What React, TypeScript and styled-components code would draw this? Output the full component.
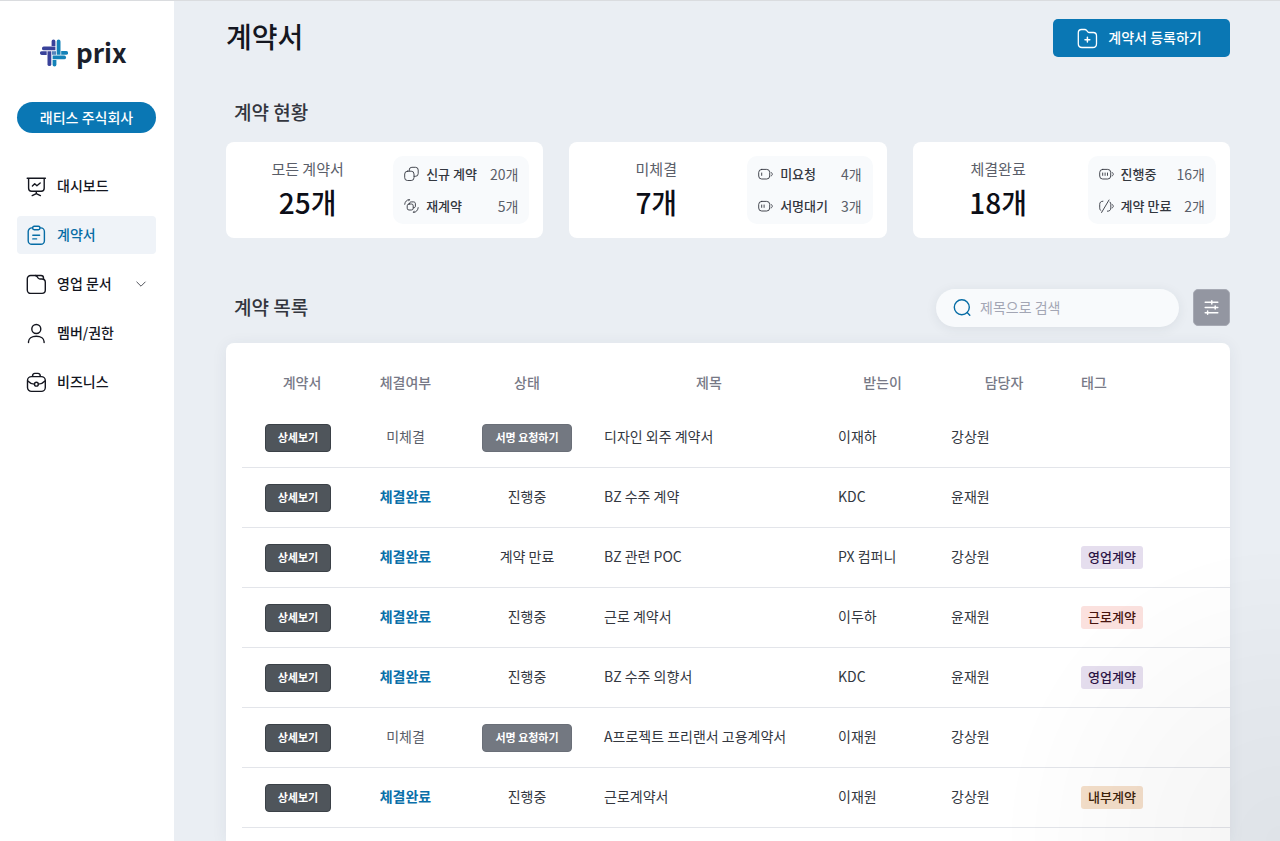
import React from "react";
import styled, { createGlobalStyle } from "styled-components";

const color = {
  primary: "#0a77b4",
  ink: "#14161f",
  text: "#33373f",
  muted: "#5a5e69",
  head: "#777986",
  line: "#e3e5ea",
  canvas: "#eaeef3",
  soft: "#f8fafc",
};

const GlobalStyle = createGlobalStyle`
  *, *::before, *::after { box-sizing: border-box; }
  body {
    margin: 0;
    background: ${color.canvas};
    color: ${color.ink};
    font-family: "Noto Sans CJK KR", "Noto Sans", sans-serif;
    font-size: 14px;
    line-height: 20px;
  }
  button, input { font: inherit; }
  h1, h2, p, dl, dd, ul { margin: 0; padding: 0; }
`;

const Layout = styled.div`
  display: grid;
  grid-template-columns: 174px minmax(0, 1fr);
  min-height: 100vh;
  border-top: 1px solid #dadcdf;

  &::after {
    content: "";
    position: fixed;
    inset: 0;
    pointer-events: none;
    background: radial-gradient(
      280px 300px at 100% 100%,
      rgba(0, 0, 0, 0.045),
      rgba(0, 0, 0, 0.025) 50%,
      transparent
    );
  }
`;

const Sidebar = styled.aside`
  display: flex;
  flex-direction: column;
  padding: 36px 18px 24px 17px;
  background: #fff;
`;

const Brand = styled.a`
  display: flex;
  align-items: center;
  gap: 8px;
  height: 32px;
  padding-left: 23px;
  color: #1b1f2b;
  font-size: 26px;
  font-weight: 700;
  line-height: 32px;
  text-decoration: none;
`;

const Caption = styled.span`
  display: block;
  padding-bottom: 2px;
`;

const CompanyButton = styled.button`
  height: 31px;
  margin-top: 33px;
  padding: 0;
  border: 0;
  border-radius: 16px;
  background: ${color.primary};
  color: #fff;
  font-weight: 500;
`;

const NavList = styled.ul`
  display: flex;
  flex-direction: column;
  gap: 11px;
  margin-top: 34px;
  list-style: none;
`;

const NavLink = styled.a<{ $active?: boolean }>`
  display: flex;
  align-items: center;
  gap: 10px;
  height: 38px;
  padding: 0 9px;
  border-radius: 4px;
  background: ${(p) => (p.$active ? "#eff3f8" : "transparent")};
  color: ${(p) => (p.$active ? "#066ca5" : color.ink)};
  font-weight: 500;
  text-decoration: none;

  svg:nth-of-type(2) {
    margin-left: auto;
  }
`;

const Main = styled.main`
  display: flex;
  flex-direction: column;
  padding: 18px 50px 0 52px;
`;

const PageHeader = styled.header`
  display: flex;
  align-items: flex-start;
  justify-content: space-between;
`;

const PageTitle = styled.h1`
  font-size: 28px;
  font-weight: 500;
  line-height: 34px;
`;

const RegisterButton = styled.button`
  display: flex;
  align-items: center;
  justify-content: center;
  gap: 10px;
  width: 177px;
  height: 38px;
  padding: 0 4px 0 0;
  border: 0;
  border-radius: 5px;
  background: ${color.primary};
  color: #fff;
  font-weight: 500;
`;

const SectionTitle = styled.h2`
  padding-left: 8px;
  color: #33363e;
  font-size: 19px;
  font-weight: 500;
  line-height: 28px;
`;

const StatSection = styled.section`
  display: flex;
  flex-direction: column;
  gap: 16px;
  margin-top: 41px;
`;

const StatGrid = styled.div`
  display: grid;
  grid-template-columns: repeat(3, minmax(0, 1fr));
  gap: 26px;
`;

const StatCard = styled.article`
  display: flex;
  align-items: center;
  height: 96px;
  padding: 0 14px 0 0;
  border-radius: 8px;
  background: #fff;
`;

const StatTotal = styled.div`
  flex: 1;
  padding-right: 4px;
  text-align: center;
`;

const StatLabel = styled.p`
  color: ${color.muted};
  font-size: 15px;
  line-height: 24px;
`;

const StatValue = styled.p`
  color: #0c0e17;
  font-size: 28px;
  font-weight: 500;
  line-height: 42px;
`;

const Breakdown = styled.dl`
  display: flex;
  flex-direction: column;
  gap: 12px;
  padding: 8px 11px;
  border-radius: 10px;
  background: ${color.soft};
  height: 68px;
`;

const BreakdownRow = styled.div`
  display: flex;
  align-items: center;
  height: 20px;
`;

const BreakdownLabel = styled.dt`
  display: flex;
  align-items: center;
  gap: 7px;
  margin-right: 13px;
  color: ${color.text};
  font-size: 13px;
  font-weight: 500;
`;

const BreakdownValue = styled.dd`
  margin-left: auto;
  color: ${color.muted};
`;

const ListSection = styled.section`
  display: flex;
  flex: 1;
  flex-direction: column;
  gap: 16px;
  margin-top: 51px;
`;

const ListHeader = styled.div`
  display: flex;
  align-items: flex-start;
  height: 38px;
`;

const ListTitle = styled(SectionTitle)`
  line-height: 36px;
`;

const SearchBox = styled.label`
  display: flex;
  align-items: center;
  gap: 8px;
  width: 243px;
  height: 38px;
  margin: 0 14px 0 auto;
  padding: 0 16px;
  border-radius: 19px;
  background: ${color.soft};
  box-shadow: 0 2px 12px rgba(40, 50, 60, 0.08);
`;

const SearchInput = styled.input`
  flex: 1;
  min-width: 0;
  padding: 0 0 3px;
  border: 0;
  outline: 0;
  background: transparent;
  color: ${color.text};

  &::placeholder {
    color: #a3a6b4;
    opacity: 1;
  }
`;

const FilterButton = styled.button`
  display: grid;
  place-items: center;
  width: 37px;
  height: 37px;
  padding: 0;
  border: 1px solid #a7aab4;
  border-radius: 5px;
  background: #9396a1;
  color: #fff;
`;

const TablePanel = styled.div`
  flex: 1;
  padding: 14px 0 0 16px;
  border-radius: 8px 8px 0 0;
  background: #fff;
  box-shadow: 0 2px 16px rgba(40, 60, 80, 0.07);
`;

const Table = styled.table`
  width: 100%;
  border-collapse: separate;
  border-spacing: 0;
  table-layout: fixed;
`;

const Col = styled.col<{ $w?: number }>`
  width: ${(p) => (p.$w ? `${p.$w}px` : "auto")};
`;

const HeadCell = styled.th<{ $align?: "left" | "center"; $pad?: number }>`
  height: 51px;
  padding: 0 0 1px ${(p) => p.$pad ?? 0}px;
  color: ${color.head};
  font-weight: 500;
  text-align: ${(p) => p.$align ?? "center"};
`;

const Cell = styled.td<{ $align?: "left" | "center"; $pad?: number; $control?: boolean }>`
  height: 60px;
  padding: 0 0 ${(p) => (p.$control ? 0 : 3)}px ${(p) => p.$pad ?? 0}px;
  border-bottom: 1px solid ${color.line};
  color: ${color.text};
  text-align: ${(p) => p.$align ?? "left"};
  white-space: nowrap;
`;

const SmallButton = styled.button<{ $tone: "dark" | "gray" }>`
  width: ${(p) => (p.$tone === "dark" ? 66 : 90)}px;
  height: 28px;
  padding: 0 0 2px;
  border: 1px solid ${(p) => (p.$tone === "dark" ? "#3b4147" : "#6a6f78")};
  border-radius: 4px;
  background: ${(p) => (p.$tone === "dark" ? "#4f555b" : "#737881")};
  color: #fff;
  font-size: 11px;
  font-weight: 700;
  line-height: 16px;
  vertical-align: middle;
`;

const Signed = styled.span<{ $done: boolean }>`
  color: ${(p) => (p.$done ? "#0a6fa9" : color.muted)};
  font-weight: ${(p) => (p.$done ? 700 : 400)};
`;

type TagTone = "violet" | "rose" | "amber";

const tagColors: Record<TagTone, [string, string]> = {
  violet: ["#e5deee", "#2c1445"],
  rose: ["#fbe1de", "#48150f"],
  amber: ["#f4dfca", "#3d230a"],
};

const Tag = styled.span<{ $tone: TagTone }>`
  display: inline-block;
  padding: 0 7px 2px;
  border-radius: 3px;
  background: ${(p) => tagColors[p.$tone][0]};
  color: ${(p) => tagColors[p.$tone][1]};
  font-size: 13px;
  font-weight: 500;
  line-height: 21px;
  vertical-align: middle;
`;

const Icon = styled.svg.attrs((p) => ({
  fill: "none",
  stroke: p.stroke ?? "currentColor",
  strokeLinecap: "round" as const,
  strokeLinejoin: "round" as const,
  "aria-hidden": true,
}))`
  display: block;
  flex: none;
`;

const LogoMark = () => (
  <Icon width="28" height="28" viewBox="0 0 28 28" stroke="none">
    <g fill="#39429a">
      <path d="M11.6 6.9V2.3a1.9 1.9 0 0 1 3.8 0v4.6z" />
      <path d="M3.8 7.6h11.6v3.7H3.8a1.85 1.85 0 0 1 0-3.7z" />
      <path d="M1.8 12.2h4.9v3.7H1.8a1.85 1.85 0 0 1 0-3.7z" />
      <path d="M7.5 12.2h3.8v13a1.9 1.9 0 0 1-3.8 0z" />
    </g>
    <g fill="#1482b8">
      <path d="M16.7 15.8V2.5a1.9 1.9 0 0 1 3.8 0v13.3z" />
      <path d="M21.2 12.1h5a1.85 1.85 0 0 1 0 3.7h-5z" />
      <path d="M12.6 16.6h11.6a1.85 1.85 0 0 1 0 3.7H12.6z" />
      <path d="M12.6 21h3.8v4.6a1.9 1.9 0 0 1-3.8 0z" />
    </g>
    <path d="M12 12.2h4v3.6h-4z" fill="#2b64aa" opacity=".8" />
  </Icon>
);

const DashboardIcon = () => (
  <Icon width="21" height="21" viewBox="0 0 21 21" strokeWidth="1.4">
    <path d="M1.2 2.2h18.2M2.6 2.4v9.8a3 3 0 0 0 3 3h9.6a3 3 0 0 0 3-3V2.4M10.3 15.4v2.4M6.2 19.6l4.1-2 4.1 2M6.4 10l2.3-2.3 2.2 2L14.2 7" />
  </Icon>
);

const ContractIcon = () => (
  <Icon width="21" height="21" viewBox="0 0 21 21" strokeWidth="1.4">
    <path d="M6.6 2.9H5.8a3.6 3.6 0 0 0-3.6 3.6v9.2a3.6 3.6 0 0 0 3.6 3.6h9a3.6 3.6 0 0 0 3.6-3.6V6.5a3.6 3.6 0 0 0-3.6-3.6h-.8" />
    <rect x="6.6" y="1.3" width="7.4" height="3.4" rx="1.6" />
    <path d="M6.8 10.3h6.8M6.8 13.9h3.8" />
  </Icon>
);

const DocumentIcon = () => (
  <Icon width="21" height="21" viewBox="0 0 21 21" strokeWidth="1.4">
    <path d="M4.600 1.500h4.400c.9 0 1.600.4 2.100 1.100l1.100 1.500c.5.600 1 .9 1.800.9h1.900c2.100 0 3.400 1.300 3.400 3.300v7.800a3.300 3.300 0 0 1-3.300 3.300H4.600a3.300 3.300 0 0 1-3.300-3.300V4.800a3.300 3.300 0 0 1 3.300-3.300z" />
    <path d="M9.400 1.500h5.600c1.600 0 2.500.9 2.500 2.400v1.300" />
  </Icon>
);

const MemberIcon = () => (
  <Icon width="21" height="21" viewBox="0 0 21 21" strokeWidth="1.4">
    <circle cx="10.3" cy="6" r="4.5" />
    <path d="M2.5 19.500v-.7c0-3.400 3.200-5.600 7.800-5.600s7.800 2.200 7.800 5.600v.7" />
  </Icon>
);

const BusinessIcon = () => (
  <Icon width="21" height="21" viewBox="0 0 21 21" strokeWidth="1.4">
    <rect x="1.5" y="4.6" width="17.8" height="14.8" rx="4" />
    <path d="M6.5 4.400c0-1.900.9-3 2.400-3h3c1.500 0 2.400 1.100 2.400 3M1.800 9c1.700 1.900 4 2.900 6.500 3.100M19 9c-1.700 1.900-4 2.900-6.500 3.100" />
    <circle cx="10.4" cy="12.2" r="1.9" />
  </Icon>
);

const ChevronIcon = () => (
  <Icon width="12" height="12" viewBox="0 0 12 12" stroke="#3d4048" strokeWidth="0.9">
    <path d="M1.8 4l4.2 4.2L10.200 4" />
  </Icon>
);

const FolderPlusIcon = () => (
  <Icon width="21" height="21" viewBox="0 0 21 21" strokeWidth="1.3">
    <path d="M4.5 1.500h3.200c.8 0 1.400.3 1.900.9l1.200 1.400c.4.500.9.700 1.500.7h3.900c2.100 0 3.300 1.300 3.300 3.300v7.900c0 2.400-1.300 3.800-3.700 3.800H5c-2.400 0-3.700-1.400-3.700-3.800V4.700c0-2 1.200-3.200 3.200-3.200z" />
    <path d="M10.400 9.300v4.800M8 11.700h4.800" strokeWidth="1.5" />
  </Icon>
);

const SearchIcon = () => (
  <Icon width="20" height="20" viewBox="0 0 20 20" stroke="#066ca5" strokeWidth="1.4">
    <circle cx="9.800" cy="9.300" r="7.500" />
    <path d="M15.200 14.600l2.600 2.600" />
  </Icon>
);

const SlidersIcon = () => (
  <Icon width="15" height="17" viewBox="0 0 15 17" strokeWidth="1.5">
    <path d="M1.200 3.300h12.600M1.200 8.500h12.600M1.200 13.700h12.600" />
    <path d="M7.800 1.700v3.200M11.200 6.900v3.200M3.600 12.100v3.200" />
  </Icon>
);

const CopyIcon = () => (
  <Icon width="15" height="16" viewBox="0 0 15 16" strokeWidth="0.9">
    <rect x="0.7" y="5.2" width="9.3" height="9.3" rx="2.8" />
    <path d="M5.200 5V4a2.700 2.700 0 0 1 2.700-2.700h3.600A2.700 2.700 0 0 1 14.200 4v3.600a2.700 2.700 0 0 1-2.700 2.700h-1.300" />
  </Icon>
);

const RenewIcon = () => (
  <Icon width="15" height="16" viewBox="0 0 15 16" strokeWidth="0.9">
    <rect x="3.2" y="6" width="6" height="6" rx="1.8" />
    <path d="M5.400 5.800c0-1.200.7-1.900 1.900-1.900h2.200c1.200 0 1.900.7 1.900 1.900v2.200c0 1.200-.7 1.900-2 1.900" />
    <path d="M.7 6.300A5 5 0 0 1 5.600 1.500l-.8 1.300M14.200 9.600a5 5 0 0 1-4.900 4.900l.8-1.300" />
  </Icon>
);

const BatteryIcon = ({ bars }: { bars: number }) => (
  <Icon width="15" height="16" viewBox="0 0 15 16" strokeWidth="0.9">
    <rect x="0.7" y="3.4" width="11" height="9.6" rx="3" />
    <path d="M13.100 6.500c.9.400 1.200.9 1.200 1.700s-.3 1.300-1.200 1.700" />
    {Array.from({ length: bars }, (_, i) => (
      <path key={i} d={`M${3.7 + i * 2.4} 7v2.400`} />
    ))}
  </Icon>
);

const ExpiredIcon = () => (
  <Icon width="15" height="16" viewBox="0 0 15 16" strokeWidth="0.9">
    <path d="M3.900 3.200C1.700 3.300.7 4.300.7 6.600v3.200c0 1.400.4 2.300 1.200 2.800M8.400 13.200c2.300 0 3.400-1 3.400-3.400V6.600c0-1.100-.2-1.900-.7-2.500M10 2L2.600 14.500M13.100 6.500c.9.400 1.200.9 1.200 1.700s-.3 1.300-1.200 1.700" />
  </Icon>
);

const navItems = [
  { label: "대시보드", icon: <DashboardIcon /> },
  { label: "계약서", icon: <ContractIcon />, active: true },
  { label: "영업 문서", icon: <DocumentIcon />, expandable: true },
  { label: "멤버/권한", icon: <MemberIcon /> },
  { label: "비즈니스", icon: <BusinessIcon /> },
];

const stats = [
  {
    label: "모든 계약서",
    value: "25개",
    rows: [
      { label: "신규 계약", value: "20개", icon: <CopyIcon /> },
      { label: "재계약", value: "5개", icon: <RenewIcon /> },
    ],
  },
  {
    label: "미체결",
    value: "7개",
    rows: [
      { label: "미요청", value: "4개", icon: <BatteryIcon bars={1} /> },
      { label: "서명대기", value: "3개", icon: <BatteryIcon bars={2} /> },
    ],
  },
  {
    label: "체결완료",
    value: "18개",
    rows: [
      { label: "진행중", value: "16개", icon: <BatteryIcon bars={3} /> },
      { label: "계약 만료", value: "2개", icon: <ExpiredIcon /> },
    ],
  },
];

type Contract = {
  status?: string;
  title: string;
  receiver: string;
  manager: string;
  tag?: { label: string; tone: TagTone };
};

const sales = { label: "영업계약", tone: "violet" as const };

// A contract without a status has not been signed yet.
const contracts: Contract[] = [
  { title: "디자인 외주 계약서", receiver: "이재하", manager: "강상원" },
  { status: "진행중", title: "BZ 수주 계약", receiver: "KDC", manager: "윤재원" },
  { status: "계약 만료", title: "BZ 관련 POC", receiver: "PX 컴퍼니", manager: "강상원", tag: sales },
  {
    status: "진행중",
    title: "근로 계약서",
    receiver: "이두하",
    manager: "윤재원",
    tag: { label: "근로계약", tone: "rose" },
  },
  { status: "진행중", title: "BZ 수주 의향서", receiver: "KDC", manager: "윤재원", tag: sales },
  { title: "A프로젝트 프리랜서 고용계약서", receiver: "이재원", manager: "강상원" },
  {
    status: "진행중",
    title: "근로계약서",
    receiver: "이재원",
    manager: "강상원",
    tag: { label: "내부계약", tone: "amber" },
  },
];

export default function App() {
  return (
    <>
      <GlobalStyle />
      <Layout>
        <Sidebar>
          <Brand href="#">
            <LogoMark />
            <Caption>prix</Caption>
          </Brand>
          <CompanyButton type="button">
            <Caption>래티스 주식회사</Caption>
          </CompanyButton>
          <nav>
            <NavList>
              {navItems.map((item) => (
                <li key={item.label}>
                  <NavLink href="#" $active={item.active} aria-current={item.active ? "page" : undefined}>
                    {item.icon}
                    <Caption>{item.label}</Caption>
                    {item.expandable && <ChevronIcon />}
                  </NavLink>
                </li>
              ))}
            </NavList>
          </nav>
        </Sidebar>

        <Main>
          <PageHeader>
            <PageTitle>계약서</PageTitle>
            <RegisterButton type="button">
              <FolderPlusIcon />
              <Caption>계약서 등록하기</Caption>
            </RegisterButton>
          </PageHeader>

          <StatSection>
            <SectionTitle>계약 현황</SectionTitle>
            <StatGrid>
              {stats.map((stat) => (
                <StatCard key={stat.label}>
                  <StatTotal>
                    <StatLabel>{stat.label}</StatLabel>
                    <StatValue>{stat.value}</StatValue>
                  </StatTotal>
                  <Breakdown>
                    {stat.rows.map((row) => (
                      <BreakdownRow key={row.label}>
                        <BreakdownLabel>
                          {row.icon}
                          {row.label}
                        </BreakdownLabel>
                        <BreakdownValue>{row.value}</BreakdownValue>
                      </BreakdownRow>
                    ))}
                  </Breakdown>
                </StatCard>
              ))}
            </StatGrid>
          </StatSection>

          <ListSection>
            <ListHeader>
              <ListTitle>계약 목록</ListTitle>
              <SearchBox>
                <SearchIcon />
                <SearchInput type="text" placeholder="제목으로 검색" aria-label="제목으로 검색" />
              </SearchBox>
              <FilterButton type="button" aria-label="필터">
                <SlidersIcon />
              </FilterButton>
            </ListHeader>
            <TablePanel>
              <Table>
                <colgroup>
                  <Col $w={112} />
                  <Col $w={103} />
                  <Col $w={140} />
                  <Col />
                  <Col $w={123} />
                  <Col $w={120} />
                  <Col $w={166} />
                </colgroup>
                <thead>
                  <tr>
                    <HeadCell $pad={8}>계약서</HeadCell>
                    <HeadCell>체결여부</HeadCell>
                    <HeadCell>상태</HeadCell>
                    <HeadCell>제목</HeadCell>
                    <HeadCell>받는이</HeadCell>
                    <HeadCell>담당자</HeadCell>
                    <HeadCell $align="left" $pad={17}>
                      태그
                    </HeadCell>
                  </tr>
                </thead>
                <tbody>
                  {contracts.map((c, i) => (
                    <tr key={i}>
                      <Cell $align="center" $control>
                        <SmallButton type="button" $tone="dark">
                          상세보기
                        </SmallButton>
                      </Cell>
                      <Cell $align="center">
                        <Signed $done={!!c.status}>{c.status ? "체결완료" : "미체결"}</Signed>
                      </Cell>
                      <Cell $align="center" $control={!c.status}>
                        {c.status ?? (
                          <SmallButton type="button" $tone="gray">
                            서명 요청하기
                          </SmallButton>
                        )}
                      </Cell>
                      <Cell $pad={7}>{c.title}</Cell>
                      <Cell $pad={17}>{c.receiver}</Cell>
                      <Cell $pad={7}>{c.manager}</Cell>
                      <Cell $pad={17} $control>
                        {c.tag && <Tag $tone={c.tag.tone}>{c.tag.label}</Tag>}
                      </Cell>
                    </tr>
                  ))}
                </tbody>
              </Table>
            </TablePanel>
          </ListSection>
        </Main>
      </Layout>
    </>
  );
}
